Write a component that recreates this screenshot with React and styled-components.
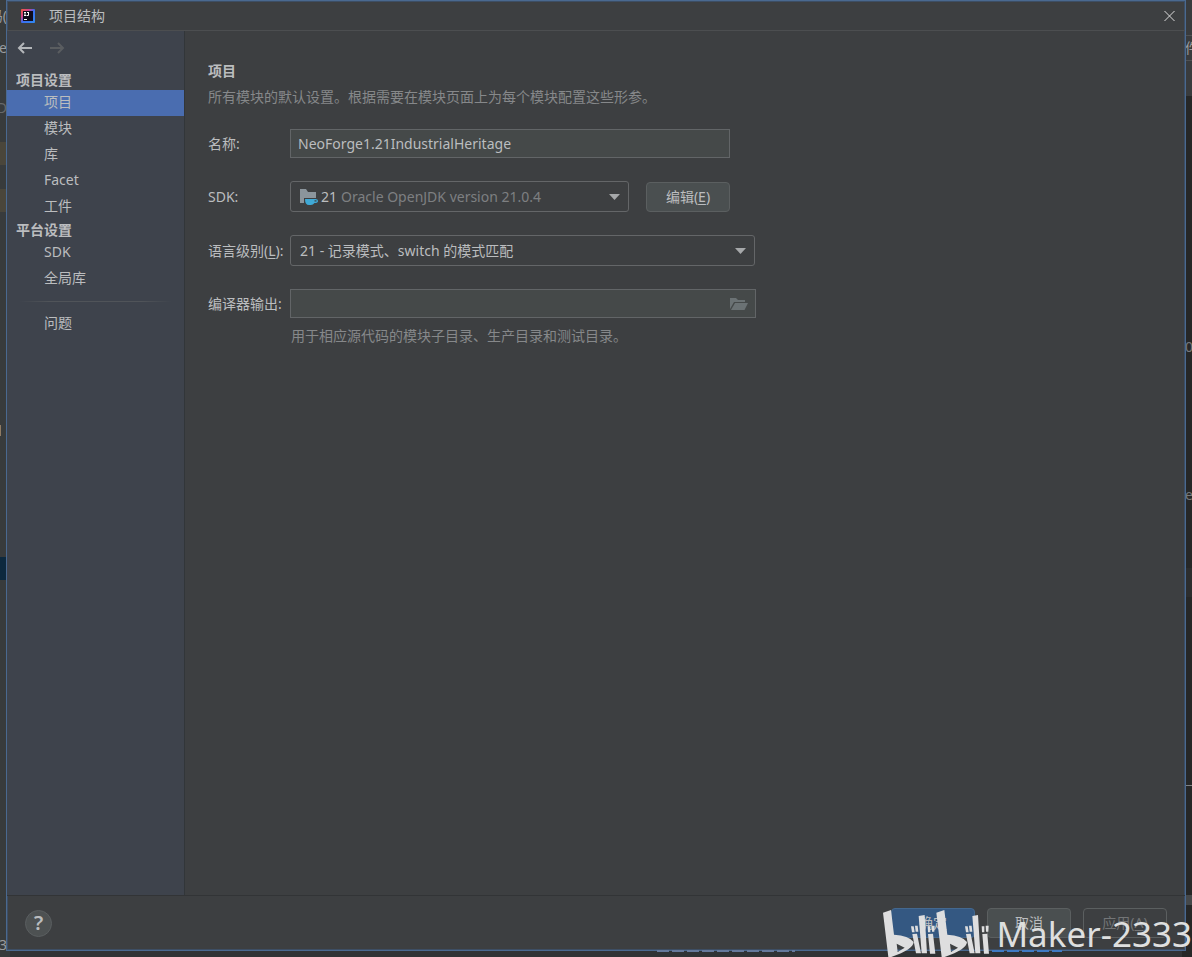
import React from "react";
import styled, { createGlobalStyle } from "styled-components";

const GlobalStyle = createGlobalStyle`
  * { box-sizing: border-box; }
  body { margin: 0; background: #313335; overflow: hidden; }
  body, button, input, select {
    font-family: "Noto Sans", "Noto Sans CJK SC", sans-serif;
    font-size: 14px;
    line-height: 20px;
    color: #bbbdbf;
  }
  h1, h2, h3, p, ul { margin: 0; padding: 0; font-size: 14px; }
  u { text-underline-offset: 2px; }
`;

const Desktop = styled.div`
  position: relative;
  min-height: 100vh;
  padding: 0 6px 6px 6px;
  display: flex;
  overflow: hidden;
`;

const EditorEdge = styled.div`
  position: absolute;
  top: 0;
  bottom: 0;
  width: 10px;
  overflow: hidden;
  ${(p) => (p.$right ? "right: 0; background: #262727;" : "left: 0; background: #383b3c;")}
`;

const Patch = styled.div`
  position: absolute;
  left: 0;
  right: ${(p) => p.$inset || 0}px;
  top: ${(p) => p.$top}px;
  height: ${(p) => p.$height}px;
  background: ${(p) => p.$color};
`;

const Scrap = styled.span`
  position: absolute;
  top: ${(p) => p.$top}px;
  ${(p) => (p.$left ? "left: 3px;" : "right: 3px;")}
  white-space: nowrap;
  color: ${(p) => p.$color || "#9a9c9e"};
`;

const StatusTrace = styled.div`
  position: absolute;
  bottom: 5px;
  left: ${(p) => p.$left}px;
  width: ${(p) => p.$width}px;
  height: 2px;
  background: repeating-linear-gradient(90deg, ${(p) => p.$color} 0 12px, transparent 12px 15px);
`;

const Dialog = styled.section`
  position: relative;
  flex: 1;
  min-width: 0;
  display: flex;
  flex-direction: column;
  background: #3d3f41;
  border: 1px solid #4a6990;
  box-shadow: inset 0 0 0 1px #3d4e64;
`;

const TitleBar = styled.header`
  display: flex;
  align-items: center;
  height: 30px;
  padding: 0 9px 0 14px;
  border-bottom: 1px solid #4c4e50;
`;

const Title = styled.h1`
  flex: 1;
  margin-left: 14px;
  font-weight: 400;
`;

const IconButton = styled.button`
  display: flex;
  padding: 0;
  border: 0;
  background: none;
`;

const Body = styled.div`
  flex: 1;
  display: flex;
`;

const Sidebar = styled.nav`
  width: 178px;
  flex: none;
  background: #3e434c;
  border-right: 1px solid #323639;
`;

const History = styled.div`
  display: flex;
  gap: 16px;
  height: 39px;
  padding: 9px 0 0 10px;
`;

const GroupTitle = styled.h3`
  padding-left: 9px;
  line-height: 20px;
  font-weight: 700;
`;

const NavList = styled.ul`
  list-style: none;
`;

const NavLink = styled.a`
  display: block;
  padding-left: 37px;
  line-height: 24px;
  height: 26px;
  color: inherit;
  text-decoration: none;
  background: ${(p) => (p.$active ? "#4a6db0" : "none")};
`;

const NavDivider = styled.hr`
  height: 1px;
  margin: 9px 12px;
  border: 0;
  background: linear-gradient(90deg, transparent, #505459 20%, #505459 80%, transparent);
`;

const Content = styled.main`
  flex: 1;
  min-width: 0;
  padding: 30px 23px;
`;

const Muted = styled.p`
  color: #86888a;
`;

const Intro = styled(Muted)`
  margin: 6px 0 22px;
`;

const Form = styled.form`
  display: flex;
  flex-direction: column;
  gap: 23px;
`;

const Field = styled.div`
  display: grid;
  grid-template-columns: 82px minmax(0, 1fr);
  align-items: center;
`;

const Label = styled.label`
  white-space: nowrap;
`;

const FieldLine = styled.div`
  display: flex;
  align-items: center;
  gap: 17px;
`;

const TextBox = styled.div`
  display: flex;
  align-items: center;
  width: 100%;
  max-width: ${(p) => p.$max}px;
  height: 29px;
  padding: 0 7px;
  border: 1px solid #626567;
  background: #454949;
`;

const TextInput = styled.input`
  flex: 1;
  min-width: 0;
  padding: 0;
  border: 0;
  outline: 0;
  background: none;
`;

const SelectBox = styled.div`
  display: flex;
  align-items: center;
  width: 100%;
  max-width: ${(p) => p.$max}px;
  height: 31px;
  padding: 0 8px 0 9px;
  border: 1px solid #646668;
  border-radius: 3px;
`;

const Select = styled.select`
  appearance: none;
  flex: 1;
  min-width: 0;
  padding: 0;
  border: 0;
  outline: 0;
  background: none;
  color: ${(p) => (p.$dim ? "#7d7f81" : "#bbbdbf")};
`;

const SdkName = styled.span`
  margin: 0 4px 0 3px;
`;

const Button = styled.button`
  width: 84px;
  height: 30px;
  flex: none;
  padding: 0;
  border: 1px solid ${(p) => (p.$kind === "primary" ? "#44688f" : "#5b5f60")};
  border-radius: 4px;
  background: ${(p) => ({ primary: "#345882", disabled: "none" }[p.$kind] || "#4a4f50")};
  color: ${(p) => (p.$kind === "disabled" ? "#737577" : "#bbbdbf")};
`;

const Hint = styled(Muted)`
  margin: 8px 0 0 83px;
`;

const Footer = styled.footer`
  display: flex;
  align-items: center;
  gap: 12px;
  height: 55px;
  padding: 0 18px;
  border-top: 1px solid #323436;
`;

const HelpButton = styled.button`
  width: 27px;
  height: 27px;
  margin-right: auto;
  padding: 0;
  border: 1px solid #5a5e60;
  border-radius: 50%;
  background: #4d5152;
  font-size: 20px;
  font-weight: 600;
`;

const Watermark = styled.div`
  position: absolute;
  right: 0;
  bottom: 0;
  display: flex;
  align-items: flex-end;
  gap: 5px;
  height: 50px;
  pointer-events: none;
`;

const Author = styled.span`
  font-size: 35px;
  line-height: 46px;
  color: #dedfdf;
`;

const AppIcon = () => (
  <svg width="14" height="14" viewBox="0 0 14 14">
    <defs>
      <linearGradient id="brand" x1="0" y1="0" x2="1" y2="1">
        <stop offset="0" stopColor="#f0603a" />
        <stop offset=".3" stopColor="#d6418a" />
        <stop offset=".5" stopColor="#3b6df0" />
        <stop offset="1" stopColor="#2f8cf2" />
      </linearGradient>
    </defs>
    <rect width="14" height="14" rx="1" fill="url(#brand)" />
    <rect x="2" y="2" width="10" height="10" fill="#100c1c" />
    <path d="M3 3.500h2M4 3.500v3M3 6.500h2M6 3.500h2M7.500 3.500v3h-2M3 10.500h3" stroke="#fff" fill="none" />
  </svg>
);

const Arrow = ({ forward, color }) => (
  <svg width="16" height="16" viewBox="0 0 16 16" fill="none" stroke={color} strokeWidth="2">
    {forward ? <path d="M1 8h13M9 3l5 5-5 5" /> : <path d="M15 8H2M7 3L2 8l5 5" />}
  </svg>
);

const Caret = () => (
  <svg width="11" height="6" viewBox="0 0 11 6" fill="#a6a8aa">
    <path d="M0 0h11L5.500 6z" />
  </svg>
);

const JdkIcon = () => (
  <svg width="18" height="18" viewBox="0 0 18 18">
    <path d="M0 1h6l2 3h8v6H4v5H0z" fill="#8b959c" />
    <path d="M5 11h10.500q2.500 0 2.500 2t-3.500 2q-1.500 2-3.500 2H9q-4 0-4-6z" fill="#3fa9d6" />
    <path d="M14.500 12.300h2v1.200h-2z" fill="#3d3f41" />
  </svg>
);

const FolderIcon = () => (
  <svg width="18" height="14" viewBox="0 0 18 14" fill="#6b7274">
    <path d="M0 1h6l2 2h7v2H4L0 12z" />
    <path d="M5 6h13l-3.500 7H1z" />
  </svg>
);

const Logo = () => (
  <svg width="108" height="50" viewBox="15 21 324 150" fill="#dededf">
    <path id="logo-b" d="M15 38L39 30L48 104Q92 106 107 126Q106 148 40 171H31ZM56 131L59 156L80 143Z" fillRule="evenodd" />
    <use href="#logo-b" x="160" />
    <path d="M99 79h8l3 18h-8zM111 77h8l2 18h-8zM103 102l14-1 12 59h-15zM122 48l18-3 7 115h-16zM149 79h8v18h-7zM162 77h8l-1 18h-7zM150 102l15-1 7 60h-16z" />
    <path d="M261 79h8l3 18h-8zM273 77h8l2 18h-8zM264 102l14-1 12 59h-15zM283 48l17-3 7 115h-15zM311 79h8v18h-7zM323 77h9l-1 18h-7zM313 102l15-1 5 60h-15z" />
  </svg>
);

const NavItems = ({ items, active }) => (
  <NavList>
    {items.map((item) => (
      <li key={item}>
        <NavLink href="#" $active={item === active}>{item}</NavLink>
      </li>
    ))}
  </NavList>
);

export default function App() {
  return (
    <Desktop>
      <GlobalStyle />
      <EditorEdge aria-hidden="true">
        <Patch $top={142} $height={23} $color="#4a463b" />
        <Patch $top={189} $height={23} $color="#4a463b" />
        <Patch $top={425} $height={11} $color="#8f7b63" $inset={9} />
        <Patch $top={557} $height={23} $color="#0d293e" />
        <Scrap $top={6}>码(</Scrap>
        <Scrap $top={38}>e</Scrap>
        <Scrap $top={98} $color="#66696b">D</Scrap>
        <Scrap $top={935}>3</Scrap>
      </EditorEdge>
      <EditorEdge $right aria-hidden="true">
        <Patch $top={0} $height={96} $color="#393b3d" />
        <Patch $top={35} $height={1} $color="#505254" />
        <Patch $top={60} $height={1} $color="#505254" />
        <Patch $top={568} $height={29} $color="#2c2d2e" />
        <Patch $top={895} $height={10} $color="#45484a" />
        <Patch $top={785} $height={1} $color="#808284" />
        <Scrap $left $top={38}>件</Scrap>
        <Scrap $left $top={337} $color="#77797b">0</Scrap>
        <Scrap $left $top={485} $color="#77797b">e</Scrap>
      </EditorEdge>
      <Dialog>
        <TitleBar>
          <AppIcon />
          <Title>项目结构</Title>
          <IconButton aria-label="关闭">
            <svg width="13" height="12" viewBox="0 0 13 12" stroke="#dcdcdc" fill="none">
              <path d="M1.500 1l10 10M11.500 1l-10 10" />
            </svg>
          </IconButton>
        </TitleBar>
        <Body>
          <Sidebar>
            <History>
              <IconButton aria-label="后退"><Arrow color="#b4b7ba" /></IconButton>
              <IconButton aria-label="前进" disabled><Arrow forward color="#5a5d60" /></IconButton>
            </History>
            <GroupTitle>项目设置</GroupTitle>
            <NavItems items={["项目", "模块", "库", "Facet", "工件"]} active="项目" />
            <GroupTitle>平台设置</GroupTitle>
            <NavItems items={["SDK", "全局库"]} />
            <NavDivider />
            <NavItems items={["问题"]} />
          </Sidebar>
          <Content>
            <h2>项目</h2>
            <Intro>所有模块的默认设置。根据需要在模块页面上为每个模块配置这些形参。</Intro>
            <Form>
              <Field>
                <Label htmlFor="name">名称:</Label>
                <TextBox $max={440}>
                  <TextInput id="name" defaultValue="NeoForge1.21IndustrialHeritage" />
                </TextBox>
              </Field>
              <Field>
                <Label htmlFor="sdk">SDK:</Label>
                <FieldLine>
                  <SelectBox $max={339}>
                    <JdkIcon />
                    <SdkName>21</SdkName>
                    <Select id="sdk" $dim>
                      <option>Oracle OpenJDK version 21.0.4</option>
                    </Select>
                    <Caret />
                  </SelectBox>
                  <Button type="button">编辑(<u>E</u>)</Button>
                </FieldLine>
              </Field>
              <Field>
                <Label htmlFor="level">语言级别(<u>L</u>):</Label>
                <SelectBox $max={465}>
                  <Select id="level">
                    <option>21 - 记录模式、switch 的模式匹配</option>
                  </Select>
                  <Caret />
                </SelectBox>
              </Field>
              <Field>
                <Label htmlFor="output">编译器输出:</Label>
                <TextBox $max={466}>
                  <TextInput id="output" />
                  <IconButton type="button" aria-label="浏览"><FolderIcon /></IconButton>
                </TextBox>
              </Field>
            </Form>
            <Hint>用于相应源代码的模块子目录、生产目录和测试目录。</Hint>
          </Content>
        </Body>
        <Footer>
          <HelpButton aria-label="帮助">?</HelpButton>
          <Button $kind="primary">确定</Button>
          <Button>取消</Button>
          <Button $kind="disabled" disabled>应用(<u>A</u>)</Button>
        </Footer>
      </Dialog>
      <StatusTrace $left={657} $width={138} $color="#66799c" />
      <StatusTrace $left={992} $width={70} $color="#3f7ac4" />
      <Watermark>
        <Logo />
        <Author>Maker-2333</Author>
      </Watermark>
    </Desktop>
  );
}
